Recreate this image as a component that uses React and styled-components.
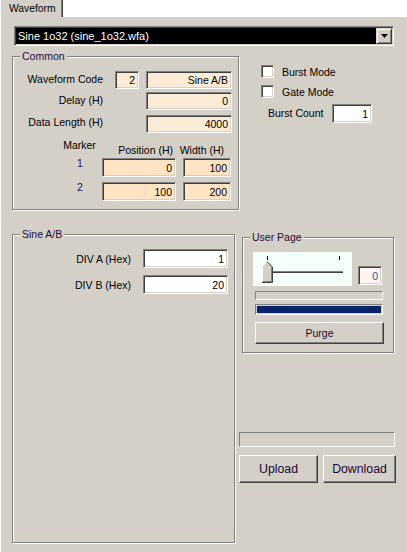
import React from "react";
import styled, { createGlobalStyle } from "styled-components";

const Global = createGlobalStyle`
  html, body { margin: 0; padding: 0; background: #d4d0c8; }
  body { font-family: "Liberation Sans", Arial, sans-serif; color: #000; }
  * { box-sizing: border-box; }
`;

const Root = styled.div`
  width: 407px;
  height: 552px;
  display: flex;
  flex-direction: column;
  background: #d4d0c8;
  overflow: hidden;
`;

const TabStrip = styled.div`
  height: 17px;
  flex-shrink: 0;
  background: #fff;
  display: flex;
`;

const Tab = styled.div`
  width: 63px;
  height: 17px;
  background: #d4d0c8;
  border-left: 1px solid #fff;
  border-right: 1px solid #404040;
  box-shadow: inset -1px 0 0 #808080;
  padding-left: 8px;
  font-size: 10.3px;
  line-height: 17px;
`;

const Panel = styled.div`
  flex: 1;
  border-left: 1px solid #fff;
  padding: 9px 0 0 11px;
  display: flex;
  flex-direction: column;
`;

const Select = styled.div`
  margin-left: 2px;
  width: 380px;
  height: 20px;
  background: #000;
  color: #fff;
  border: 1px solid;
  border-color: #808080 #fff #fff #808080;
  box-shadow: inset 1px 1px 0 #404040, inset -1px -1px 0 #d4d0c8;
  display: flex;
  align-items: center;
  justify-content: space-between;
  padding: 0 1px 0 3px;
  font-size: 11px;
`;

const DropButton = styled.div`
  width: 16px;
  height: 16px;
  background: #d4d0c8;
  border: 1px solid;
  border-color: #d4d0c8 #404040 #404040 #d4d0c8;
  box-shadow: inset 1px 1px 0 #fff, inset -1px -1px 0 #808080;
  display: flex;
  align-items: center;
  justify-content: center;
`;

const Row = styled.div`
  display: flex;
  align-items: ${(p) => p.$align || "flex-start"};
  margin-top: ${(p) => p.$mt || 0}px;
`;

const Group = styled.div`
  position: relative;
  flex-shrink: 0;
  width: ${(p) => p.$w}px;
  height: ${(p) => p.$h}px;
  margin-top: ${(p) => p.$mt || 0}px;
  margin-left: ${(p) => p.$ml || 0}px;
  border: 1px solid #808080;
  box-shadow: inset 1px 1px 0 #fff, 1px 1px 0 #fff;
  padding-top: ${(p) => p.$pt || 14}px;
`;

const Legend = styled.div`
  position: absolute;
  top: -7px;
  left: 7px;
  padding: 0 2px;
  background: #d4d0c8;
  font-size: 10.5px;
  line-height: 13px;
  color: #1c0c3c;
`;

const FieldRow = styled.div`
  display: flex;
  align-items: center;
  height: ${(p) => p.$h || 18}px;
  margin-top: ${(p) => p.$mt || 0}px;
`;

const Label = styled.div`
  width: ${(p) => p.$w}px;
  flex-shrink: 0;
  text-align: ${(p) => p.$align || "right"};
  padding-left: ${(p) => p.$pl || 0}px;
  font-size: 10.5px;
  white-space: nowrap;
  position: relative;
  top: ${(p) => p.$dy || 0}px;
`;

const Field = styled.div`
  flex-shrink: 0;
  width: ${(p) => p.$w}px;
  height: ${(p) => p.$h || 18}px;
  margin-left: ${(p) => p.$ml || 0}px;
  margin-bottom: ${(p) => p.$mb || 0}px;
  background: ${(p) => p.$bg || "#fff"};
  color: ${(p) => p.$color || "#000"};
  border: 1px solid;
  border-color: #808080 #fff #fff #808080;
  box-shadow: inset 1px 1px 0 #404040, inset -1px -1px 0 #d4d0c8;
  display: flex;
  align-items: center;
  justify-content: flex-end;
  padding-right: 3px;
  font-size: 10.5px;
`;

const MarkerGrid = styled.div`
  display: grid;
  grid-template-columns: 38px 74px 48px;
  column-gap: 7px;
  margin-left: 44px;
  margin-top: ${(p) => p.$mt || 0}px;
  height: ${(p) => p.$h}px;
`;

const MarkerText = styled.div`
  font-size: 10.5px;
  white-space: nowrap;
  align-self: ${(p) => p.$self || "start"};
  justify-self: ${(p) => p.$justify || "center"};
  padding-left: ${(p) => p.$pl || 0}px;
  margin-right: ${(p) => p.$mr || 0}px;
  color: ${(p) => p.$color || "#000"};
  position: relative;
  top: ${(p) => p.$dy || 0}px;
`;

const RightCol = styled.div`
  display: flex;
  flex-direction: column;
  margin-left: ${(p) => p.$ml || 0}px;
  padding-top: ${(p) => p.$pt || 0}px;
`;

const CheckRow = styled.div`
  display: flex;
  align-items: center;
  height: 13px;
  margin-top: ${(p) => p.$mt || 0}px;
`;

const CheckBox = styled.div`
  width: 13px;
  height: 13px;
  background: #fff;
  border: 1px solid;
  border-color: #808080 #fff #fff #808080;
  box-shadow: inset 1px 1px 0 #404040, inset -1px -1px 0 #d4d0c8;
`;

const CheckLabel = styled.span`
  margin-left: 8px;
  font-size: 10.5px;
  white-space: nowrap;
`;

const SliderRow = styled.div`
  display: flex;
  align-items: flex-end;
  margin-left: 10px;
`;

const SliderPanel = styled.div`
  width: 99px;
  height: 34px;
  background: #f5fffa;
`;

const Progress = styled.div`
  width: ${(p) => p.$w}px;
  height: ${(p) => p.$h}px;
  margin-left: ${(p) => p.$ml || 0}px;
  margin-top: ${(p) => p.$mt || 0}px;
  border: 1px solid;
  border-color: #808080 #fff #fff #808080;
  padding: 1px;
`;

const ProgressFill = styled.div`
  height: 100%;
  background: #0a246a;
`;

const Button = styled.div`
  width: ${(p) => p.$w}px;
  height: ${(p) => p.$h}px;
  margin-left: ${(p) => p.$ml || 0}px;
  margin-top: ${(p) => p.$mt || 0}px;
  background: #d4d0c8;
  border: 1px solid;
  border-color: #fff #404040 #404040 #fff;
  box-shadow: inset -1px -1px 0 #808080;
  display: flex;
  align-items: center;
  justify-content: center;
  font-size: ${(p) => p.$fs || 10.5}px;
  color: #1a0a30;
  white-space: nowrap;
`;

const ButtonRow = styled.div`
  display: flex;
  gap: 5px;
  margin-top: ${(p) => p.$mt || 0}px;
`;

const LINEN = "#faebd7";
const BISQUE = "#ffe4c4";

function Slider() {
  return (
    <svg width="99" height="34" viewBox="0 0 99 34">
      <line x1="14.5" y1="4" x2="14.5" y2="8" stroke="#000" />
      <line x1="86.5" y1="4" x2="86.5" y2="8" stroke="#000" />
      <rect x="18" y="19" width="72" height="1" fill="#808080" />
      <rect x="18" y="20" width="72" height="1" fill="#404040" />
      <rect x="18" y="21" width="72" height="1" fill="#fff" />
      <polygon points="9,30.5 9,14 14,9 19.5,14.5 19.5,30.5" fill="#d4d0c8" />
      <path d="M9.5 30 V14.2 L14 9.7" stroke="#fff" fill="none" />
      <path d="M14 9.7 L19.5 15 V30.5 H9" stroke="#404040" fill="none" />
      <path d="M18.5 15.3 V29.5 H10" stroke="#808080" fill="none" />
    </svg>
  );
}

export default function App() {
  return (
    <Root>
      <Global />
      <TabStrip>
        <Tab>Waveform</Tab>
      </TabStrip>
      <Panel>
        <Select>
          <span>Sine 1o32 (sine_1o32.wfa)</span>
          <DropButton>
            <svg width="7" height="4" viewBox="0 0 7 4">
              <polygon points="0,0 7,0 3.5,4" fill="#000" />
            </svg>
          </DropButton>
        </Select>

        <Row $mt={10}>
          <Group $w={227} $h={154}>
            <Legend>Common</Legend>
            <FieldRow>
              <Label $w={90} $dy={-1}>Waveform Code</Label>
              <Field $w={24} $ml={12} $bg={LINEN}>2</Field>
              <Field $w={86} $ml={7} $bg={LINEN}>Sine A/B</Field>
            </FieldRow>
            <FieldRow $mt={3}>
              <Label $w={90} $dy={-1}>Delay (H)</Label>
              <Field $w={86} $ml={43} $bg={LINEN}>0</Field>
            </FieldRow>
            <FieldRow $mt={5}>
              <Label $w={90} $dy={-2}>Data Length (H)</Label>
              <Field $w={86} $ml={43} $bg={LINEN}>4000</Field>
            </FieldRow>
            <MarkerGrid $mt={5} $h={17}>
              <MarkerText $pl={7} $dy={1}>Marker</MarkerText>
              <MarkerText $self="end" $justify="end" $mr={3} $dy={1}>Position (H)</MarkerText>
              <MarkerText $self="end" $justify="end" $mr={7} $dy={1}>Width (H)</MarkerText>
            </MarkerGrid>
            <MarkerGrid $mt={3} $h={19}>
              <MarkerText $pl={8} $dy={-1} $color="#2a1050">1</MarkerText>
              <Field $w={74} $h={19} $bg={BISQUE}>0</Field>
              <Field $w={48} $h={19} $bg={BISQUE}>100</Field>
            </MarkerGrid>
            <MarkerGrid $mt={5} $h={19}>
              <MarkerText $pl={8} $dy={-1} $color="#2a1050">2</MarkerText>
              <Field $w={74} $h={19} $bg={BISQUE}>100</Field>
              <Field $w={48} $h={19} $bg={BISQUE}>200</Field>
            </MarkerGrid>
          </Group>

          <RightCol $ml={22} $pt={9}>
            <CheckRow>
              <CheckBox />
              <CheckLabel>Burst Mode</CheckLabel>
            </CheckRow>
            <CheckRow $mt={7}>
              <CheckBox />
              <CheckLabel>Gate Mode</CheckLabel>
            </CheckRow>
            <FieldRow $mt={6} $h={19}>
              <Label $w={71} $align="left" $pl={7} $dy={-1}>
                Burst Count
              </Label>
              <Field $w={40} $h={19}>1</Field>
            </FieldRow>
          </RightCol>
        </Row>

        <Row $mt={24}>
          <Group $w={223} $h={309}>
            <Legend>Sine A/B</Legend>
            <FieldRow $h={19}>
              <Label $w={118}>DIV A (Hex)</Label>
              <Field $w={85} $h={19} $ml={12}>1</Field>
            </FieldRow>
            <FieldRow $h={19} $mt={7}>
              <Label $w={118}>DIV B (Hex)</Label>
              <Field $w={85} $h={19} $ml={12}>20</Field>
            </FieldRow>
          </Group>

          <RightCol $ml={4}>
            <Group $w={152} $h={116} $mt={3} $ml={3}>
              <Legend>User Page</Legend>
              <SliderRow>
                <SliderPanel>
                  <Slider />
                </SliderPanel>
                <Field $w={24} $h={19} $ml={6} $mb={1} $bg="#fff5ee" $color="#2060a0">
                  0
                </Field>
              </SliderRow>
              <Progress $w={128} $h={9} $ml={12} $mt={5} />
              <Progress $w={128} $h={11} $ml={12} $mt={4}>
                <ProgressFill />
              </Progress>
              <Button $w={129} $h={22} $ml={12} $mt={7}>Purge</Button>
            </Group>
            <Progress $w={156} $h={15} $mt={79} />
            <ButtonRow $mt={8}>
              <Button $w={79} $h={28} $fs={12.3}>Upload</Button>
              <Button $w={73} $h={28} $fs={12.3}>Download</Button>
            </ButtonRow>
          </RightCol>
        </Row>
      </Panel>
    </Root>
  );
}
